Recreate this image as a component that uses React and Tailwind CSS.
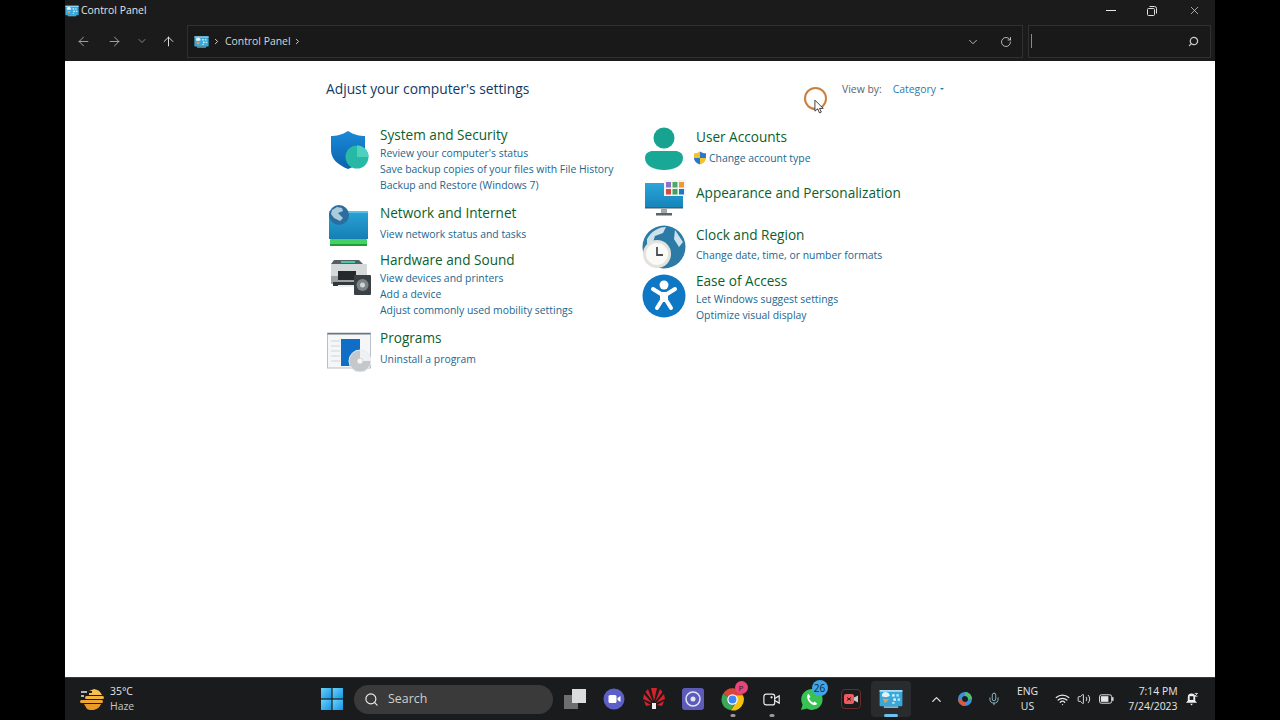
import { ArrowLeft, ArrowRight, ArrowUp, ChevronDown, ChevronRight, ChevronUp, RotateCw, Search, X, Mic, Wifi, Volume2 } from 'lucide-react';

const font = "font-['Open_Sans','Liberation_Sans',sans-serif]";

function CpIcon({ className }) {
    return (
        <svg viewBox="0 0 40 32" className={className}>
            <rect x="1" y="1" width="38" height="27" rx="1.5" fill="#35a8dc" />
            <rect x="1" y="1" width="38" height="3" fill="#a5def5" />
            <path d="M5 8 a7 7 0 0 1 13 3 l-6 2 l-7-1z" fill="#e4f2f9" />
            <path d="M6 15 l11 2 l-7 6z" fill="#e8a04a" />
            <rect x="22" y="8" width="4" height="4" fill="#eef9fd" />
            <rect x="29" y="8" width="4" height="4" fill="#bfe6f6" />
            <rect x="24" y="15" width="4" height="4" fill="#eef9fd" />
            <rect x="31" y="15" width="4" height="4" fill="#bfe6f6" />
            <rect x="22" y="21" width="4" height="3" fill="#bfe6f6" />
            <rect x="8" y="28" width="24" height="3" fill="#7fb8d4" />
        </svg>
    );
}

function ShieldIcon() {
    return (
        <svg viewBox="0 0 40 40" className="w-[40px] h-[40px]">
            <defs>
                <linearGradient id="shieldBody" x1="0" y1="0" x2="0" y2="1">
                    <stop offset="0" stopColor="#1a8ad8" />
                    <stop offset="1" stopColor="#0b62ad" />
                </linearGradient>
            </defs>
            <path d="M19 1 C13 5 7 6 2 6 L2 20 C2 29 9 35 19 39 C29 35 36 29 36 20 L36 6 C31 6 25 5 19 1Z" fill="url(#shieldBody)" />
            <circle cx="28" cy="27" r="11.5" fill="#27b9a5" />
            <path d="M28 15.5 a11.5 11.5 0 0 1 11.5 11.5 L28 27Z" fill="#4dd0bd" />
        </svg>
    );
}

function NetworkIcon() {
    return (
        <svg viewBox="0 0 42 42" className="w-[42px] h-[42px]">
            <defs>
                <linearGradient id="netScreen" x1="0" y1="0" x2="0" y2="1">
                    <stop offset="0" stopColor="#2aa2d6" />
                    <stop offset="1" stopColor="#157fb4" />
                </linearGradient>
            </defs>
            <rect x="2" y="6" width="39" height="28" fill="url(#netScreen)" />
            <rect x="2" y="6" width="39" height="2" fill="#5cc0e6" />
            <rect x="3" y="34" width="37" height="7" rx="1" fill="#44d063" />
            <rect x="3" y="39" width="37" height="2" fill="#1f9c3c" />
            <circle cx="12" cy="10" r="10" fill="#2a6d9e" />
            <path d="M5 5 l5-3 l5 1 l1 3 l-5 2 l5 5 l-3 3 l-6-3 l-3-4z" fill="#a9cbdd" />
        </svg>
    );
}

function PrinterIcon() {
    return (
        <svg viewBox="0 0 42 38" className="w-[42px] h-[38px]">
            <path d="M5 1 H30 L34 5 H2z" fill="#556065" />
            <rect x="12" y="2" width="14" height="2" fill="#4cc6a8" />
            <rect x="2" y="5" width="36" height="12" fill="#d6d9da" />
            <rect x="2" y="17" width="32" height="8" fill="#9ea3a5" />
            <rect x="9" y="12" width="18" height="9" fill="#26292b" />
            <rect x="4" y="23" width="26" height="4" fill="#33373a" />
            <rect x="9" y="26" width="16" height="2" fill="#eceeee" />
            <rect x="25" y="16" width="17" height="20" rx="1" fill="#3a4043" />
            <circle cx="33.5" cy="26" r="6" fill="#7b8488" />
            <circle cx="33.5" cy="26" r="2.5" fill="#d0d5d7" />
        </svg>
    );
}

function ProgramsIcon() {
    return (
        <svg viewBox="0 0 44 40" className="w-[44px] h-[40px]">
            <rect x="0.5" y="1" width="43" height="35" fill="#f4f6f8" stroke="#b9c0c6" />
            <rect x="0.5" y="1" width="43" height="1.5" fill="#6b747d" />
            <path d="M4 9h9M4 14h9M4 19h9M4 24h9M4 29h9" stroke="#d0d5da" strokeWidth="1.2" />
            <rect x="14" y="7" width="19" height="27" fill="#0f6fc6" />
            <circle cx="33" cy="29" r="11" fill="#c4c8cb" />
            <circle cx="33" cy="29" r="11" fill="none" stroke="#e8eaeb" strokeWidth="1" />
            <path d="M33 18 a11 11 0 0 1 11 11 H36 a3 3 0 0 0-3-3z" fill="#eef0f1" />
            <circle cx="33" cy="29" r="2.6" fill="#f5f6f7" />
        </svg>
    );
}

function UserIcon() {
    return (
        <svg viewBox="0 0 40 44" className="w-[40px] h-[44px]">
            <circle cx="20" cy="11" r="10.5" fill="#17a390" />
            <path d="M1 31 C1 26 5 24 9 24 H31 C35 24 39 26 39 31 C39 39 30 43 20 43 C10 43 1 39 1 31Z" fill="#1aa896" />
        </svg>
    );
}

function UacIcon() {
    return (
        <svg viewBox="0 0 14 14" className="w-[14px] h-[14px] shrink-0">
            <path d="M7 0.5 C5 1.8 3 2.3 1 2.3 V7 H7Z" fill="#f2c230" />
            <path d="M7 0.5 C9 1.8 11 2.3 13 2.3 V7 H7Z" fill="#2b78c9" />
            <path d="M7 7 H1 C1 10 3.5 12.3 7 13.5Z" fill="#2b78c9" />
            <path d="M7 7 H13 C13 10 10.5 12.3 7 13.5Z" fill="#f2c230" />
        </svg>
    );
}

function AppearanceIcon() {
    return (
        <svg viewBox="0 0 42 36" className="w-[42px] h-[36px]">
            <defs>
                <linearGradient id="lookScreen" x1="0" y1="0" x2="0" y2="1">
                    <stop offset="0" stopColor="#2aa6da" />
                    <stop offset="1" stopColor="#1583b8" />
                </linearGradient>
            </defs>
            <rect x="1" y="3" width="38" height="25" fill="url(#lookScreen)" />
            <rect x="1" y="27" width="38" height="1.5" fill="#4c5c66" />
            <rect x="17" y="28" width="6" height="5" fill="#a2a9ad" />
            <rect x="12" y="33" width="16" height="2.5" fill="#5c6469" />
            <rect x="20" y="0" width="22" height="16" fill="#f2f4f5" />
            <rect x="22" y="2" width="5" height="5.5" fill="#8a72c4" />
            <rect x="28.5" y="2" width="5" height="5.5" fill="#4fa86a" />
            <rect x="35" y="2" width="5" height="5.5" fill="#ee9a2c" />
            <rect x="22" y="9" width="5" height="5.5" fill="#d84a3e" />
            <rect x="28.5" y="9" width="5" height="5.5" fill="#3aa655" />
            <rect x="35" y="9" width="5" height="5.5" fill="#1e78c8" />
        </svg>
    );
}

function ClockIcon() {
    return (
        <svg viewBox="0 0 44 44" className="w-[44px] h-[44px]">
            <circle cx="22" cy="22" r="21.5" fill="#2b7ba6" />
            <path d="M5 14 C10 5 18 2 24 2 l-3 6 l-8 3 l-2 6 l-6 2z" fill="#cfe2ec" />
            <path d="M33 5 l8 12 l-4 5 l-5-8z" fill="#cfe2ec" />
            <circle cx="15" cy="29" r="14" fill="#e4e2da" />
            <circle cx="15" cy="29" r="11" fill="#fafaf8" />
            <path d="M15 22 V30 H21" fill="none" stroke="#4a4f52" strokeWidth="1.8" />
        </svg>
    );
}

function AccessIcon() {
    return (
        <svg viewBox="0 0 44 44" className="w-[44px] h-[44px]">
            <circle cx="22" cy="22" r="21.5" fill="#0f78c4" />
            <circle cx="22" cy="11" r="4.5" fill="#fff" />
            <path d="M11 15 L19 20 H25 L33 15 M20 20 V26 L15 34 M24 20 V26 L29 34" fill="none" stroke="#fff" strokeWidth="4" strokeLinecap="round" strokeLinejoin="round" />
            <rect x="19" y="19" width="6" height="9" fill="#fff" />
        </svg>
    );
}

const leftItems = [
    { title: 'System and Security', icon: <ShieldIcon />, wrap: 'mt-[5px] pl-[3px]', top: 'mt-0', gap: 'mt-0', links: ["Review your computer's status", 'Save backup copies of your files with File History', 'Backup and Restore (Windows 7)'] },
    { title: 'Network and Internet', icon: <NetworkIcon />, wrap: 'mt-[2px] pl-[1px]', top: 'mt-[10px]', gap: 'mt-[3px]', links: ['View network status and tasks'] },
    { title: 'Hardware and Sound', icon: <PrinterIcon />, wrap: 'mt-[9px] pl-[3px]', top: 'mt-[8px]', gap: 'mt-0', links: ['View devices and printers', 'Add a device', 'Adjust commonly used mobility settings'] },
    { title: 'Programs', icon: <ProgramsIcon />, wrap: 'mt-[4px] pl-[1px]', top: 'mt-[10px]', gap: 'mt-[3px]', links: ['Uninstall a program'] },
];

const rightItems = [
    { title: 'User Accounts', icon: <UserIcon />, wrap: 'mt-0 pl-[2px]', top: 'mt-0', gap: 'mt-[3px]', links: ['Change account type'], uac: true },
    { title: 'Appearance and Personalization', icon: <AppearanceIcon />, wrap: '-mt-[3px] pl-[2px]', top: 'mt-[17px]', gap: 'mt-0', links: [] },
    { title: 'Clock and Region', icon: <ClockIcon />, wrap: 'mt-0', top: 'mt-[22px]', gap: 'mt-[2px]', links: ['Change date, time, or number formats'] },
    { title: 'Ease of Access', icon: <AccessIcon />, wrap: 'mt-[3px]', top: 'mt-[8px]', gap: 'mt-0', links: ['Let Windows suggest settings', 'Optimize visual display'] },
];

function Category({ item }) {
    return (
        <div className={`flex ${item.top}`}>
            <div className={`w-[54px] h-0 shrink-0 ${item.wrap}`}>{item.icon}</div>
            <div>
                <div className="h-[20px] leading-[20px] text-[13.6px] text-[#0b5f2c] whitespace-nowrap">{item.title}</div>
                <div className={item.gap}>
                    {item.links.map(l => (
                        <div key={l} className="flex items-center h-[16px] leading-[16px] text-[10.4px] text-[#22668f] whitespace-nowrap">
                            {item.uac && <span className="-ml-[3px] mr-[2px]"><UacIcon /></span>}
                            {l}
                        </div>
                    ))}
                </div>
            </div>
        </div>
    );
}

function TaskIcon({ children, active, dot }) {
    return (
        <div className={`relative w-[39.5px] h-[36px] flex items-center justify-center rounded ${active ? 'bg-[#2a2b2c]' : ''}`}>
            {children}
            {dot && <div className="absolute bottom-0 left-1/2 -translate-x-1/2 w-[5px] h-[3px] rounded bg-[#9a9a9a]" />}
            {active && <div className="absolute bottom-0 left-1/2 -translate-x-1/2 w-[14px] h-[3px] rounded bg-[#6cc4ee]" />}
        </div>
    );
}

export default function App() {
    return (
        <div className={`w-[1280px] h-[720px] bg-black flex justify-center overflow-hidden ${font}`}>
            <div className="w-[1150px] h-full flex flex-col">
                {/* title bar */}
                <div className="h-[21px] bg-[#1b1b1b] flex items-center text-[#e4e4e4] text-[10.4px]">
                    <CpIcon className="w-[14px] h-[12px]" />
                    <span className="ml-[2px]">Control Panel</span>
                    <div className="ml-auto flex items-center pr-[14px]">
                        <div className="w-[10px] h-px bg-[#e8e8e8]" />
                        <svg viewBox="0 0 10 10" className="w-[10px] h-[10px] ml-[31px]" fill="none" stroke="#e0e0e0">
                            <rect x="0.5" y="2.5" width="7" height="7" rx="1" />
                            <path d="M2.5 .5h5a2 2 0 0 1 2 2v5" />
                        </svg>
                        <X className="w-[13px] h-[13px] ml-[31px] text-[#e0e0e0]" strokeWidth={1.3} />
                    </div>
                </div>
                {/* address bar */}
                <div className="h-[40px] bg-[#1b1b1b] flex items-center text-[#d8d8d8]">
                    <div className="w-[122px] flex items-center pl-[11px] shrink-0">
                        <ArrowLeft className="w-[15px] h-[15px] text-[#a8a8a8]" strokeWidth={1.5} />
                        <ArrowRight className="w-[15px] h-[15px] ml-[16px] text-[#a8a8a8]" strokeWidth={1.5} />
                        <ChevronDown className="w-[12px] h-[12px] ml-[14px] text-[#a8a8a8]" strokeWidth={1.5} />
                        <ArrowUp className="w-[15px] h-[15px] ml-[13px] text-[#e8e8e8]" strokeWidth={1.5} />
                    </div>
                    <div className="w-[836px] h-[33px] bg-[#191919] border border-[#303030] flex items-center pl-[6px] pr-[10px] pt-[1px] text-[10.4px] shrink-0">
                        <CpIcon className="w-[15px] h-[12px]" />
                        <ChevronRight className="w-[9px] h-[9px] ml-[3px]" strokeWidth={2.6} />
                        <span className="ml-[4px]">Control Panel</span>
                        <ChevronRight className="w-[9px] h-[9px] ml-[2px]" strokeWidth={2.6} />
                        <ChevronDown className="w-[14px] h-[14px] ml-auto" strokeWidth={1.4} />
                        <RotateCw className="w-[12px] h-[12px] ml-[20px]" strokeWidth={1.6} />
                    </div>
                    <div className="w-[183px] h-[33px] ml-[5px] bg-[#191919] border border-[#303030] flex items-center pl-[2px] pr-[11px] shrink-0">
                        <div className="w-px h-[14px] bg-[#8a8a8a]" />
                        <Search className="w-[11px] h-[11px] ml-auto -scale-x-100 text-[#c8c8c8]" strokeWidth={2.8} />
                    </div>
                </div>
                {/* content */}
                <div className="relative flex-1 bg-white pl-[261px]">
                    <div className="flex items-center h-[18px] mt-[19px]">
                        <h1 className="w-[203px] text-[13.8px] text-[#0f3a63] whitespace-nowrap">Adjust your computer's settings</h1>
                        <span className="ml-[313px] mt-[1px] text-[10.4px] text-[#5e6468]">View by:</span>
                        <span className="ml-[11px] mt-[1px] text-[10.4px] text-[#2a7ba8]">Category</span>
                        <span className="ml-[4px] mb-[1px] w-0 h-0 border-x-[2px] border-x-transparent border-t-[2px] border-t-[#2a7ba8]" />
                    </div>
                    <div className="flex mt-[27px]">
                        <div className="w-[316px]">
                            {leftItems.map(it => <Category key={it.title} item={it} />)}
                        </div>
                        <div className="pt-[2px]">
                            {rightItems.map(it => <Category key={it.title} item={it} />)}
                        </div>
                    </div>
                    {/* busy cursor */}
                    <div className="absolute left-[739px] top-[26px] w-[23px] h-[23px] rounded-full border-2 border-[#c9803f]" />
                    <svg viewBox="0 0 12 17" className="absolute left-[749px] top-[38px] w-[11px] h-[16px]">
                        <path d="M1 1 V13 L4 10.5 L6 15 L8 14 L6 10 H10Z" fill="#fff" stroke="#333" strokeWidth="1" />
                    </svg>
                </div>
                {/* taskbar */}
                <div className="h-[43px] bg-[#1a1b1c] border-t border-[#3a3a3a] flex items-center text-[#e6e6e6] shrink-0">
                    <div className="w-[256px] flex items-center pl-[15px] shrink-0">
                        <svg viewBox="0 0 24 22" className="w-[24px] h-[22px]">
                            <path d="M14 1 A10 10 0 0 1 22 7 H9 V5 H12 V3 H9 Z" fill="#f5c04e" />
                            <rect x="5" y="8" width="19" height="3" rx="1.5" fill="#f3b33f" />
                            <rect x="0" y="12" width="23" height="3" rx="1.5" fill="#eda832" />
                            <path d="M4 16 H21 A10 10 0 0 1 7 21 Z" fill="#e79a28" />
                            <path d="M1 4h6M1 8h3" stroke="#e8e8e8" strokeWidth="1.3" />
                        </svg>
                        <div className="ml-[6px] text-[10.4px] leading-[15px]">
                            <div>35°C</div>
                            <div className="text-[#c8c8c8]">Haze</div>
                        </div>
                    </div>
                    <svg viewBox="0 0 22 22" className="w-[22px] h-[22px] shrink-0">
                        <defs>
                            <linearGradient id="winLogo" x1="0" y1="0" x2="1" y2="1">
                                <stop offset="0" stopColor="#6ad4f8" />
                                <stop offset="1" stopColor="#1593e6" />
                            </linearGradient>
                        </defs>
                        <rect x="0" y="0" width="10.4" height="10.4" fill="url(#winLogo)" />
                        <rect x="11.6" y="0" width="10.4" height="10.4" fill="url(#winLogo)" />
                        <rect x="0" y="11.6" width="10.4" height="10.4" fill="url(#winLogo)" />
                        <rect x="11.6" y="11.6" width="10.4" height="10.4" fill="url(#winLogo)" />
                    </svg>
                    <div className="w-[199px] h-[29px] ml-[11px] rounded-full bg-[#3a3a3b] flex items-center pl-[10px] text-[12.4px] text-[#cfcfcf] shrink-0">
                        <Search className="w-[15px] h-[15px] text-[#f0f0f0]" strokeWidth={1.8} />
                        <span className="ml-[9px]">Search</span>
                    </div>
                    <div className="ml-[2px] flex items-center shrink-0">
                        <TaskIcon>
                            <div className="relative w-[22px] h-[20px]">
                                <div className="absolute left-0 bottom-0 w-[14px] h-[14px] bg-[#6e6e6e]" />
                                <div className="absolute right-0 top-0 w-[14px] h-[14px] bg-[#dcdcdc]" />
                            </div>
                        </TaskIcon>
                        <TaskIcon>
                            <svg viewBox="0 0 22 22" className="w-[22px] h-[22px]">
                                <circle cx="11" cy="11" r="10.5" fill="#5b5fc7" />
                                <rect x="5.5" y="7" width="8" height="8" rx="1.5" fill="#fff" />
                                <path d="M14.5 10 l3-2 v6 l-3-2z" fill="#fff" />
                            </svg>
                        </TaskIcon>
                        <TaskIcon>
                            <svg viewBox="0 0 22 22" className="w-[22px] h-[22px]">
                                <path d="M10 14 L5 1 L2.5 4 Z M12 14 L17 1 L19.5 4Z M11 13 L8 0 H14Z M9 15 L1 6 L0 11Z M13 15 L21 6 L22 11Z M8 17 L1 13 L3 18Z M14 17 L21 13 L19 18Z" fill="#d2232c" />
                                <rect x="9" y="15" width="4" height="6" fill="#eee" />
                            </svg>
                        </TaskIcon>
                        <TaskIcon>
                            <svg viewBox="0 0 22 22" className="w-[22px] h-[22px]">
                                <rect x="0" y="0" width="22" height="22" rx="3" fill="#5c5cb8" />
                                <circle cx="11" cy="11" r="7" fill="none" stroke="#e4e4f6" strokeWidth="1.5" />
                                <circle cx="11" cy="11" r="2.5" fill="#e4e4f6" />
                            </svg>
                        </TaskIcon>
                        <TaskIcon dot>
                            <svg viewBox="0 0 22 22" className="w-[23px] h-[23px]">
                                <path d="M11 11 L2 5.5 A10.5 10.5 0 0 1 21 7 H11Z" fill="#db4437" />
                                <path d="M11 11 L2 5.5 A10.5 10.5 0 0 0 9.5 21.4 L15 12Z" fill="#3aa757" />
                                <path d="M11 7 H21 A10.5 10.5 0 0 1 9.5 21.4 L15 13Z" fill="#f4c20d" />
                                <circle cx="11" cy="11" r="5" fill="#fff" />
                                <circle cx="11" cy="11" r="3.8" fill="#4285f4" />
                            </svg>
                            <div className="absolute top-0 right-[5px] w-[13px] h-[13px] rounded-full text-[8px] leading-[13px] text-center text-[#222] bg-[#e8457a]">P</div>
                        </TaskIcon>
                        <TaskIcon dot>
                            <svg viewBox="0 0 20 16" className="w-[18px] h-[15px]" fill="none" stroke="#f0f0f0" strokeWidth="1.3">
                                <rect x="1" y="2" width="12" height="12" rx="2.5" />
                                <path d="M13 7 l5-3 v8 l-5-3" />
                                <circle cx="9.5" cy="5.5" r="0.6" fill="#f0f0f0" />
                            </svg>
                        </TaskIcon>
                        <TaskIcon>
                            <svg viewBox="0 0 22 22" className="w-[23px] h-[23px]">
                                <path d="M11 1 A10 10 0 0 0 2.5 16 L1 21 L6.5 19.6 A10 10 0 1 0 11 1Z" fill="#38c254" />
                                <path d="M7.5 6 C6 8 7 12 10 14.5 C13 17 15.5 16.5 16.5 15 L14 12.8 L12.6 14 C11 13.5 9 11 8.7 9.8 L10 8.5 L8.6 6Z" fill="#fff" />
                            </svg>
                            <div className="absolute -top-[1px] right-[4px] w-[16px] h-[16px] rounded-full text-[10px] leading-[16px] text-center text-[#10243a] bg-[#3ea6e8]">26</div>
                        </TaskIcon>
                        <TaskIcon>
                            <div className="w-[20px] h-[20px] border border-[#6b2b2b] rounded flex items-center justify-center">
                                <svg viewBox="0 0 14 10" className="w-[14px] h-[10px]">
                                    <rect x="0" y="0" width="10" height="10" rx="2" fill="#ee5a5f" />
                                    <path d="M10 3.5 L14 1.5 V8.5 L10 6.5Z" fill="#c8c8c8" />
                                    <path d="M3 6.5 L7 3.5 M3 3.5 L7 6.5" stroke="#1a1b1c" strokeWidth="1" />
                                </svg>
                            </div>
                        </TaskIcon>
                        <TaskIcon active>
                            <CpIcon className="w-[24px] h-[20px]" />
                        </TaskIcon>
                    </div>
                    <div className="flex items-center ml-[18px] text-[10.4px] shrink-0">
                        <ChevronUp className="w-[15px] h-[15px]" strokeWidth={2} />
                        <svg viewBox="0 0 14 14" className="w-[14px] h-[14px] ml-[14px]">
                            <circle cx="7" cy="7" r="5" fill="none" stroke="#3f8fd8" strokeWidth="4" />
                            <path d="M7 0 A7 7 0 0 1 14 7 H10 A3 3 0 0 0 7 4Z" fill="#4cc36a" />
                            <path d="M0 7 A7 7 0 0 0 7 14 V10 A3 3 0 0 1 4 7Z" fill="#e2553f" />
                        </svg>
                        <Mic className="w-[14px] h-[14px] ml-[15px] text-[#9fd0e0]" strokeWidth={1.4} />
                        <div className="w-[28px] ml-[13px] text-center leading-[15px]">
                            <div>ENG</div>
                            <div>US</div>
                        </div>
                        <Wifi className="w-[15px] h-[15px] ml-[13px]" strokeWidth={2} />
                        <Volume2 className="w-[14px] h-[14px] ml-[7px]" strokeWidth={1.6} />
                        <svg viewBox="0 0 16 10" className="w-[15px] h-[10px] ml-[8px]">
                            <rect x="0.5" y="0.5" width="13" height="9" rx="2" fill="none" stroke="#e6e6e6" />
                            <rect x="2" y="2" width="8" height="6" fill="#e6e6e6" />
                            <rect x="14" y="3" width="1.5" height="4" fill="#e6e6e6" />
                        </svg>
                        <div className="w-[57px] ml-[7px] text-right leading-[15px] whitespace-nowrap">
                            <div>7:14 PM</div>
                            <div>7/24/2023</div>
                        </div>
                        <svg viewBox="0 0 14 14" className="w-[13px] h-[14px] ml-[7px]">
                            <path d="M7 1 A4 4 0 0 0 3 5 V9 L1 11 H13 L11 9 V5 A4 4 0 0 0 7 1Z M5.5 12 H8.5 L7 14Z" fill="#f0f0f0" />
                            <rect x="5" y="4" width="4" height="4" fill="#1a1b1c" />
                            <path d="M10.5 1 H13.5 L10.5 4 H13.5" fill="none" stroke="#f0f0f0" strokeWidth="0.9" />
                        </svg>
                    </div>
                </div>
            </div>
        </div>
    );
}
